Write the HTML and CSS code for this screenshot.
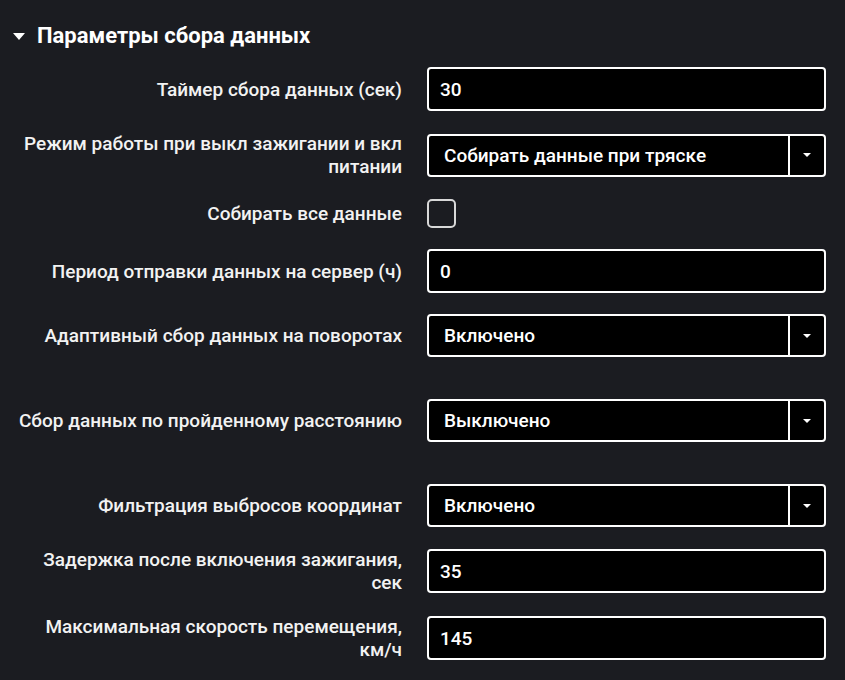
FILE: index.html
```html
<!DOCTYPE html>
<html lang="ru">
    <head>
        <meta charset="UTF-8" />
        <meta name="viewport" content="width=device-width, initial-scale=1.0" />
        <title>Параметры сбора данных</title>
        <link rel="stylesheet" href="styles.css">
    </head>
    <body>
        <!-- Блок параметров -->
        <section class="params">
            <h2 class="params-title">
                <span class="caret"></span>
                Параметры сбора данных
            </h2>

            <div class="rows">
                <div class="row">
                    <label class="lbl">Таймер сбора данных (сек)</label>
                    <div class="field"><div class="inp">30</div></div>
                </div>

                <div class="row">
                    <label class="lbl">Режим работы при выкл зажигании и вкл питании</label>
                    <div class="field">
                        <div class="sel">
                            <span class="sel-val">Собирать данные при тряске</span>
                            <span class="sel-btn"><i class="arrow"></i></span>
                        </div>
                    </div>
                </div>

                <div class="row">
                    <label class="lbl">Собирать все данные</label>
                    <div class="field"><span class="chk"></span></div>
                </div>

                <div class="row">
                    <label class="lbl">Период отправки данных на сервер (ч)</label>
                    <div class="field"><div class="inp">0</div></div>
                </div>

                <div class="row spaced">
                    <label class="lbl">Адаптивный сбор данных на поворотах</label>
                    <div class="field">
                        <div class="sel">
                            <span class="sel-val">Включено</span>
                            <span class="sel-btn"><i class="arrow"></i></span>
                        </div>
                    </div>
                </div>

                <div class="row spaced">
                    <label class="lbl">Сбор данных по пройденному расстоянию</label>
                    <div class="field">
                        <div class="sel">
                            <span class="sel-val">Выключено</span>
                            <span class="sel-btn"><i class="arrow"></i></span>
                        </div>
                    </div>
                </div>

                <div class="row">
                    <label class="lbl">Фильтрация выбросов координат</label>
                    <div class="field">
                        <div class="sel">
                            <span class="sel-val">Включено</span>
                            <span class="sel-btn"><i class="arrow"></i></span>
                        </div>
                    </div>
                </div>

                <div class="row">
                    <label class="lbl">Задержка после включения зажигания, сек</label>
                    <div class="field"><div class="inp">35</div></div>
                </div>

                <div class="row">
                    <label class="lbl">Максимальная скорость перемещения, км/ч</label>
                    <div class="field"><div class="inp">145</div></div>
                </div>
            </div>
        </section>
    </body>
</html>
```

FILE: styles.css
```css
:root {
    --bg: #1b1c21;
    --txt: #f2f2f2;
    --lblw: 387px;
    --fldw: 399px;
}

body {
    margin: 0;
    background-color: var(--bg);
    color: var(--txt);
    font-family: Roboto, "Liberation Sans", sans-serif;
    overflow: hidden;
}

/* блок параметров */
.params {
    padding: 21px 19px 0 13px;
}

.params-title {
    display: flex;
    align-items: center;
    gap: 12px;
    margin: 0;
    font-size: 22px;
    font-weight: 700;
    line-height: 30px;
    color: #fff;
}

/* треугольник свернуть/развернуть */
.caret {
    width: 0;
    height: 0;
    border-left: 6px solid transparent;
    border-right: 6px solid transparent;
    border-top: 7px solid #fff;
}

.rows {
    display: flex;
    flex-direction: column;
    gap: 21px;
    margin-top: 16px;
    padding-left: 2px;
}

.row {
    display: flex;
    align-items: center;
    gap: 25px;
}

.row.spaced {
    margin-bottom: 21px;
}

.lbl {
    width: var(--lblw);
    text-align: right;
    font-size: 19px;
    font-weight: 500;
    line-height: 23px;
}

.field {
    width: var(--fldw);
}

.inp,
.sel {
    box-sizing: border-box;
    height: 44px;
    border: 2px solid #fff;
    border-radius: 4px;
    background-color: #000;
    color: #fff;
    font-size: 19px;
    font-weight: 500;
}

.inp {
    display: flex;
    align-items: center;
    padding: 0 11px;
}

.sel {
    display: flex;
    height: 43px;
}

.sel-val {
    flex: 1;
    display: flex;
    align-items: center;
    padding: 0 15px;
}

.sel-btn {
    width: 34px;
    display: flex;
    align-items: center;
    justify-content: center;
    border-left: 2px solid #fff;
}

.arrow {
    width: 0;
    height: 0;
    border-left: 4px solid transparent;
    border-right: 4px solid transparent;
    border-top: 4px solid #fff;
}

.chk {
    display: block;
    box-sizing: border-box;
    width: 29px;
    height: 29px;
    border: 2px solid #d8d8d8;
    border-radius: 5px;
}
```
